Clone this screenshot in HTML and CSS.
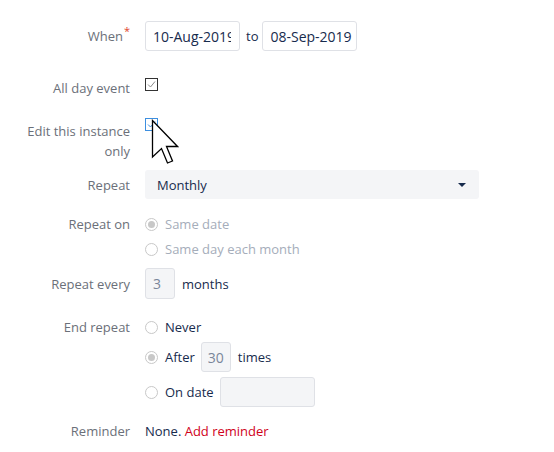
FILE: index.html
```html
<!DOCTYPE html>
<html>
<head>
<meta charset="utf-8">
<link rel="stylesheet" href="styles.css">
</head>
<body>
<form class="form">
  <div class="row row-when">
    <label class="label">When<span class="req">*</span></label>
    <div class="ctrl inline">
      <input class="text date first" value="10-Aug-2019">
      <span class="to">to</span>
      <input class="text date" value="08-Sep-2019">
    </div>
  </div>

  <div class="row row-allday">
    <label class="label">All day event</label>
    <div class="ctrl">
      <span class="check">
        <svg width="13" height="13" viewBox="0 0 13 13"><rect x="0.5" y="0.5" width="12" height="12" fill="#fff" stroke="#333"/><path d="M3 6.5 L5.5 9 L10 3.5" fill="none" stroke="#8a8a8a" stroke-width="1"/></svg>
      </span>
    </div>
  </div>

  <div class="row row-edit">
    <label class="label label-two">Edit this instance<br>only</label>
    <div class="ctrl">
      <span class="check">
        <svg width="13" height="13" viewBox="0 0 13 13"><rect x="0.5" y="0.5" width="12" height="12" fill="#fff" stroke="#3d8fe0"/><path d="M3 6.5 L5.5 9 L10 3.5" fill="none" stroke="#3d8fe0" stroke-width="1"/></svg>
      </span>
      <svg class="cursor" width="28" height="46" viewBox="0 0 28 46"><path d="M1.5 1.5 L1.5 38 L10.5 29.5 L16.5 44 L21.5 42 L15.5 27.5 L26.5 27.5 Z" fill="#fff" stroke="#000" stroke-width="1.3" stroke-linejoin="miter"/></svg>
    </div>
  </div>

  <div class="row row-repeat">
    <label class="label">Repeat</label>
    <div class="ctrl">
      <div class="select"><span>Monthly</span><span class="caret"></span></div>
    </div>
  </div>

  <div class="row row-on">
    <label class="label">Repeat on</label>
    <div class="ctrl stack">
      <div class="opt disabled"><span class="radio on"></span>Same date</div>
      <div class="opt disabled"><span class="radio"></span>Same day each month</div>
    </div>
  </div>

  <div class="row row-every">
    <label class="label">Repeat every</label>
    <div class="ctrl inline">
      <input class="text small" value="3" disabled>
      <span class="unit">months</span>
    </div>
  </div>

  <div class="row row-end">
    <label class="label">End repeat</label>
    <div class="ctrl stack">
      <div class="opt"><span class="radio"></span>Never</div>
      <div class="opt tall"><span class="radio on"></span>After<input class="text small n30" value="30" disabled><span class="unit">times</span></div>
      <div class="opt tall"><span class="radio"></span>On date<input class="text ondate" value="" disabled></div>
    </div>
  </div>

  <div class="row row-remind">
    <label class="label">Reminder</label>
    <div class="ctrl"><span class="none">None.</span> <a class="add" href="#">Add reminder</a></div>
  </div>
</form>
</body>
</html>
```
FILE: styles.css
```css
html, body {
  margin: 0;
  padding: 0;
  background: #fff;
}
body {
  font-family: "Open Sans", "Noto Sans", sans-serif;
  font-size: 13px;
  color: #172b4d;
}
.form {
  display: flex;
  flex-direction: column;
  padding-top: 21px;
}
.row {
  display: grid;
  grid-template-columns: 130px 1fr;
  column-gap: 15px;
  align-items: center;
}
.label {
  text-align: right;
  color: #6b7079;
  line-height: 20px;
}
.req {
  color: #e0442c;
  font-size: 11px;
  position: relative;
  top: -6px;
  margin-left: 1px;
}
.ctrl {
  line-height: 20px;
}
.inline {
  display: flex;
  align-items: center;
}
.text {
  box-sizing: border-box;
  height: 30px;
  border: 1px solid #dfe1e6;
  border-radius: 3px;
  background: #fff;
  font-family: inherit;
  font-size: 14px;
  color: #172b4d;
  padding: 0 4px 0 7px;
  margin: 0;
  outline: none;
}
.date {
  width: 95px;
}
.date.first {
  padding-right: 8px;
}
.to {
  margin: 0 4px 0 6px;
  font-size: 13px;
}
.row-allday {
  margin-top: 27px;
  align-items: start;
}
.check {
  display: block;
  width: 13px;
  height: 13px;
}
.check svg {
  display: block;
}
.row-edit {
  margin-top: 20px;
  align-items: start;
}
.row-edit .label {
  padding-top: 3px;
}
.row-edit .ctrl {
  position: relative;
}
.cursor {
  position: absolute;
  left: 6px;
  top: 1px;
}
.row-repeat {
  margin-top: 9px;
}
.select {
  box-sizing: border-box;
  width: 334px;
  height: 29px;
  background: #f4f5f7;
  border-radius: 3px;
  display: flex;
  align-items: center;
  justify-content: space-between;
  padding: 0 12px 0 12px;
  font-size: 13px;
}
.caret {
  width: 0;
  height: 0;
  border-left: 4px solid transparent;
  border-right: 4px solid transparent;
  border-top: 4px solid #172b4d;
  margin-right: 1px;
}
.row-on {
  margin-top: 15px;
  align-items: start;
}
.stack {
  display: flex;
  flex-direction: column;
  gap: 5px;
}
.opt {
  display: flex;
  align-items: center;
  height: 20px;
  font-size: 13px;
  color: #172b4d;
}
.opt.tall {
  height: 30px;
}
.opt.disabled {
  color: #a5adba;
}
.radio {
  box-sizing: border-box;
  width: 13px;
  height: 13px;
  border: 1px solid #c8c8c8;
  border-radius: 50%;
  margin-right: 7px;
  position: relative;
  flex: none;
}
.radio.on::after {
  content: "";
  position: absolute;
  left: 2px;
  top: 2px;
  width: 7px;
  height: 7px;
  border-radius: 50%;
  background: #c8c8c8;
}
.row-every {
  margin-top: 9px;
}
.small {
  width: 30px;
  height: 31px;
  background: #f4f5f7;
  color: #7a869a;
}
.unit {
  margin-left: 7px;
  font-size: 13px;
}
.row-end {
  margin-top: 18px;
  align-items: start;
}
.n30 {
  margin-left: 6px;
  height: 30px;
  padding: 0 4px 0 6px;
}
.ondate {
  width: 95px;
  background: #f4f5f7;
  margin-left: 6px;
}
.row-remind {
  margin-top: 14px;
}
.row-remind .ctrl {
  font-size: 13px;
}
.add {
  color: #d0021b;
  text-decoration: none;
}
```
